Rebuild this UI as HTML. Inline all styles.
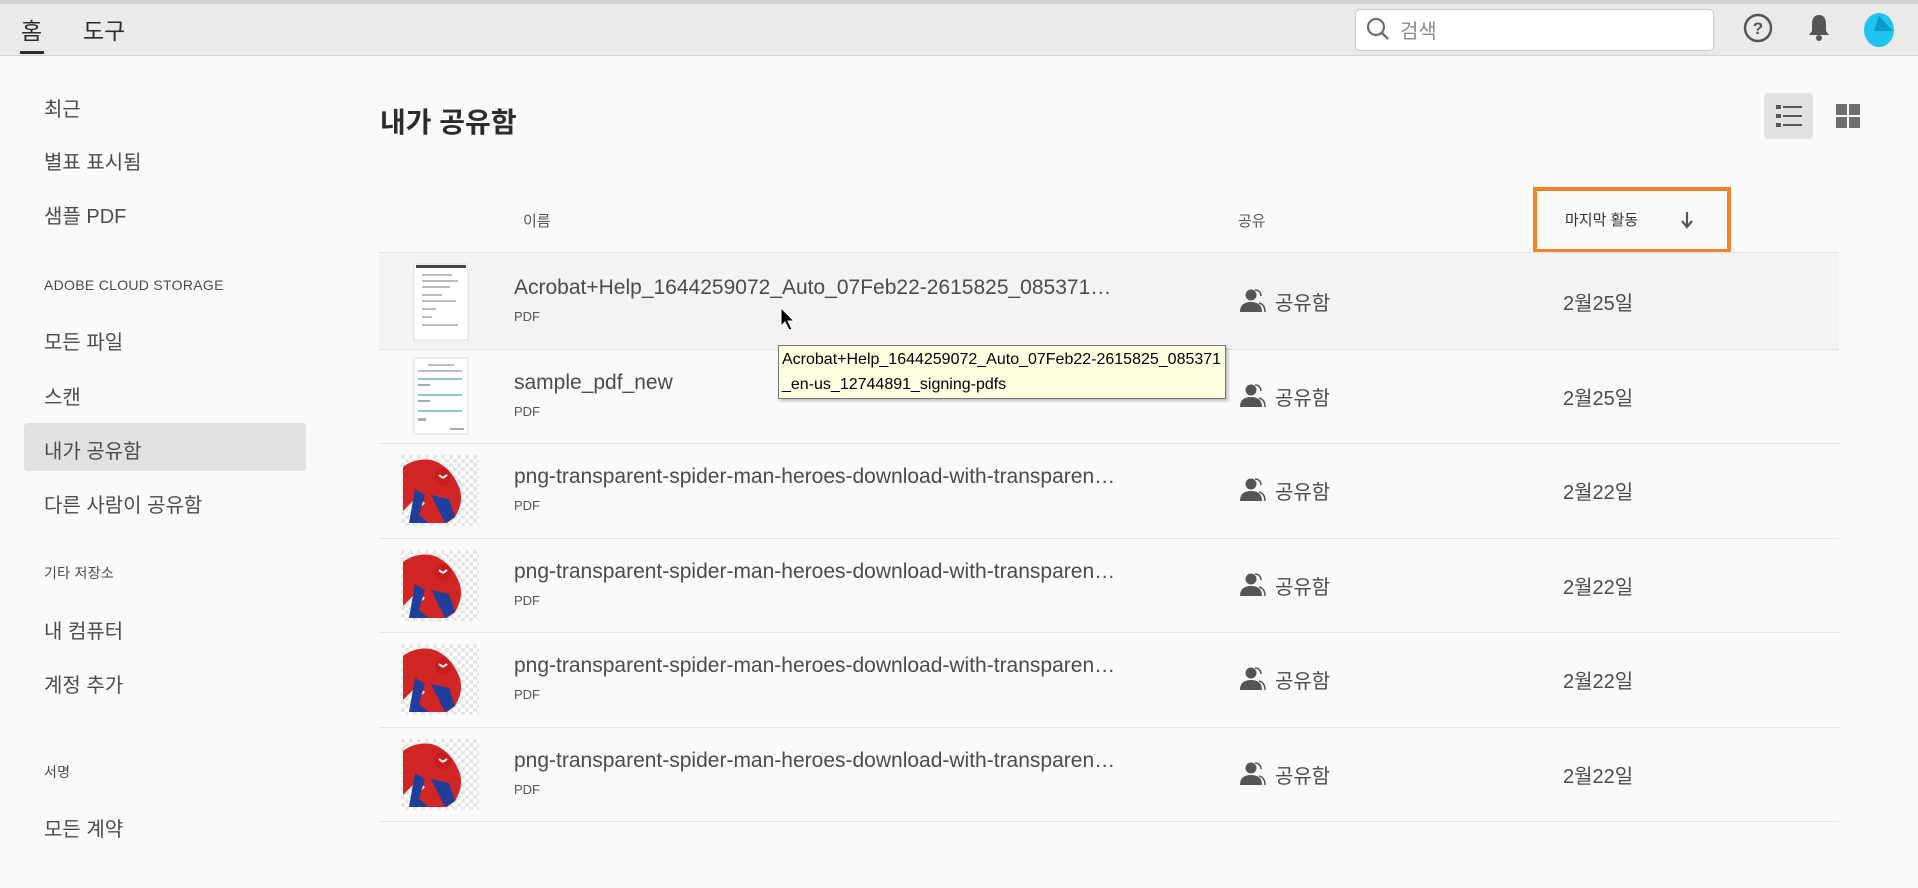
<!DOCTYPE html>
<html><head><meta charset="utf-8"><style>
*{box-sizing:border-box;margin:0;padding:0}
body{width:1918px;height:888px;overflow:hidden;background:#fafafa;font-family:"Liberation Sans","Noto Sans CJK KR",sans-serif;color:#4b4b4b;position:relative}
.a{position:absolute;white-space:nowrap}
#top{position:absolute;left:0;top:0;width:1918px;height:56px;background:#eaeaea;border-top:4px solid #d0d0d0;border-bottom:1px solid #d4d4d4}
.nav{font-size:23px;color:#2c2c2c}
.side{font-size:20px;color:#4b4b4b;left:44px}
.cap{font-size:14px;color:#4b4b4b;left:44px;letter-spacing:.3px}
.fn{font-family:"Liberation Sans Narrow","Liberation Sans","Noto Sans CJK KR",sans-serif;font-size:21px;color:#4b4b4b;width:606px;overflow:hidden;text-overflow:ellipsis}
.pdf{font-family:"Liberation Sans Narrow","Liberation Sans",sans-serif;font-size:13px;color:#555}
.sh{font-size:20px;color:#4b4b4b}
.line{position:absolute;left:379px;width:1460px;height:1px;background:#e3e3e3}
</style></head><body>
<div id="top"></div>
<div class="a nav" style="left:21px;top:12px">홈</div>
<div class="a" style="left:20px;top:51px;width:24px;height:3px;background:#2c2c2c"></div>
<div class="a nav" style="left:83px;top:12px">도구</div>
<div class="a" style="left:1355px;top:9px;width:359px;height:42px;background:#fff;border:1px solid #c8c8c8;border-radius:5px"></div>
<svg class="a" style="left:1365px;top:16px" width="26" height="26" viewBox="0 0 26 26"><circle cx="11" cy="11" r="8" fill="none" stroke="#6e6e6e" stroke-width="2.2"/><path d="M17 17l6 6" stroke="#6e6e6e" stroke-width="2.4"/></svg>
<div class="a" style="left:1400px;top:15px;font-size:20px;color:#8a8a8a">검색</div>
<svg class="a" style="left:1742px;top:12px" width="32" height="32" viewBox="0 0 32 32"><circle cx="16" cy="16" r="13" fill="none" stroke="#555" stroke-width="2.5"/><text x="16" y="22" text-anchor="middle" font-size="17" font-weight="bold" fill="#555" font-family="Liberation Sans">?</text></svg>
<svg class="a" style="left:1806px;top:12px" width="26" height="32" viewBox="0 0 26 32"><path d="M13 3c-5 0-7 4-7 9v7l-3 4h20l-3-4v-7c0-5-2-9-7-9z" fill="#555"/><circle cx="13" cy="26" r="3" fill="#555"/></svg>
<svg class="a" style="left:1862px;top:11px" width="34" height="38" viewBox="0 0 34 38"><ellipse cx="17" cy="19" rx="15" ry="17" fill="#1ec3ef"/><path d="M17 5l14 15H12z" fill="#0a9ac8"/></svg>

<div class="a" style="left:24px;top:423px;width:282px;height:48px;background:#e1e1e1;border-radius:4px"></div>
<div class="a side" style="top:93px">최근</div>
<div class="a side" style="top:146px">별표 표시됨</div>
<div class="a side" style="top:200px">샘플 PDF</div>
<div class="a cap" style="top:277px">ADOBE CLOUD STORAGE</div>
<div class="a side" style="top:326px">모든 파일</div>
<div class="a side" style="top:381px">스캔</div>
<div class="a side" style="top:435px">내가 공유함</div>
<div class="a side" style="top:489px">다른 사람이 공유함</div>
<div class="a cap" style="top:563px">기타 저장소</div>
<div class="a side" style="top:615px">내 컴퓨터</div>
<div class="a side" style="top:669px">계정 추가</div>
<div class="a cap" style="top:762px">서명</div>
<div class="a side" style="top:813px">모든 계약</div>

<div class="a" style="left:380px;top:101px;font-size:28px;font-weight:bold;color:#2c2c2c">내가 공유함</div>
<div class="a" style="left:1764px;top:93px;width:49px;height:46px;background:#e1e1e1;border-radius:4px"></div>
<svg class="a" style="left:1776px;top:104px" width="26" height="24" viewBox="0 0 26 24"><g fill="#555"><rect x="0" y="1" width="5" height="4"/><rect x="7" y="2" width="19" height="2"/><rect x="0" y="10" width="5" height="4"/><rect x="7" y="11" width="19" height="2"/><rect x="0" y="19" width="5" height="4"/><rect x="7" y="20" width="19" height="2"/></g></svg>
<svg class="a" style="left:1836px;top:104px" width="24" height="24" viewBox="0 0 24 24"><g fill="#6e6e6e"><rect x="0" y="0" width="11" height="11"/><rect x="13" y="0" width="11" height="11"/><rect x="0" y="13" width="11" height="11"/><rect x="13" y="13" width="11" height="11"/></g></svg>

<div class="a" style="left:523px;top:210px;font-size:15px;color:#555">이름</div>
<div class="a" style="left:1238px;top:210px;font-size:15px;color:#555">공유</div>
<div class="a" style="left:1533px;top:187px;width:198px;height:66px;border:4px solid #f5832a"></div>
<div class="a" style="left:1565px;top:209px;font-size:15px;color:#333">마지막 활동</div>
<svg class="a" style="left:1680px;top:211px" width="14" height="18" viewBox="0 0 14 18"><path d="M7 1v14M2 10l5 6 5-6" fill="none" stroke="#555" stroke-width="2.2"/></svg>
<div class="line" style="top:252px"></div>
<div class="a" style="left:379px;top:253px;width:1460px;height:96px;background:#f3f3f3"></div>
<div class="line" style="top:349px"></div>
<div class="line" style="top:443px"></div>
<div class="line" style="top:538px"></div>
<div class="line" style="top:632px"></div>
<div class="line" style="top:727px"></div>
<div class="line" style="top:821px"></div>

<svg width="0" height="0" style="position:absolute"><defs>
<pattern id="ck" width="8" height="8" patternUnits="userSpaceOnUse"><rect width="8" height="8" fill="#fff"/><rect width="4" height="4" fill="#e6e6e6"/><rect x="4" y="4" width="4" height="4" fill="#e6e6e6"/></pattern>
<g id="sp"><rect width="78" height="71" fill="url(#ck)"/><path d="M2 12c10-8 26-10 36-4 10 6 16 14 20 24 4 10 2 20-4 30l-8 6H20l-6-10 10-10-8-6-14 14z" fill="#d22525"/><path d="M14 34l10 6-6 20 10 8H8z" fill="#1f3f9a"/><path d="M30 40l18 4 6 18-10 6z" fill="#1f3f9a"/><ellipse cx="42" cy="22" rx="8" ry="9" fill="#c81e1e"/><path d="M38 20l4 3M46 20l-4 3" stroke="#fff" stroke-width="2"/></g>
<g id="doc"><rect width="54" height="76" fill="#fff" stroke="#ddd"/><rect x="2" y="1" width="50" height="3" fill="#444"/><g fill="#bbb"><rect x="8" y="10" width="30" height="2"/><rect x="8" y="16" width="36" height="2"/><rect x="8" y="22" width="28" height="2"/><rect x="8" y="30" width="20" height="2"/><rect x="8" y="36" width="34" height="2"/><rect x="8" y="44" width="14" height="2"/><rect x="8" y="52" width="10" height="2"/><rect x="8" y="60" width="36" height="2"/></g></g>
<g id="doc2"><rect width="54" height="76" fill="#fff" stroke="#ddd"/><g fill="#bbb"><rect x="14" y="6" width="26" height="2"/><rect x="4" y="12" width="44" height="2"/></g><g fill="#8cc7d4"><rect x="4" y="20" width="44" height="2"/><rect x="4" y="36" width="44" height="2"/><rect x="4" y="52" width="44" height="2"/></g><g fill="#aaa"><rect x="4" y="26" width="12" height="2"/><rect x="4" y="42" width="12" height="2"/><rect x="4" y="60" width="8" height="3"/><rect x="36" y="70" width="14" height="2"/></g></g>
<g id="usr"><circle cx="12" cy="7" r="5.5" fill="#555"/><path d="M1 24c0-7 4-10 11-10s11 3 11 10z" fill="#555"/><path d="M16 2c4 0 6 3 6 6M20 15c4 1 6 4 6 9" stroke="#555" stroke-width="1.5" fill="none"/></g>
</defs></svg>

<svg class="a" style="left:413px;top:263px" width="56" height="78"><use href="#doc" x="1" y="1"/></svg>
<svg class="a" style="left:413px;top:357px" width="56" height="78"><use href="#doc2" x="1" y="1"/></svg>
<svg class="a" style="left:401px;top:455px" width="78" height="71"><use href="#sp"/></svg>
<svg class="a" style="left:401px;top:550px" width="78" height="71"><use href="#sp"/></svg>
<svg class="a" style="left:401px;top:644px" width="78" height="71"><use href="#sp"/></svg>
<svg class="a" style="left:401px;top:739px" width="78" height="71"><use href="#sp"/></svg>

<div class="a fn" style="left:514px;top:276px">Acrobat+Help_1644259072_Auto_07Feb22-2615825_085371_en-us_12744891_signing-pdfs</div>
<div class="a pdf" style="left:514px;top:309px">PDF</div>
<div class="a fn" style="left:514px;top:371px">sample_pdf_new</div>
<div class="a pdf" style="left:514px;top:404px">PDF</div>
<div class="a fn" style="left:514px;top:465px">png-transparent-spider-man-heroes-download-with-transparent-background</div>
<div class="a pdf" style="left:514px;top:498px">PDF</div>
<div class="a fn" style="left:514px;top:560px">png-transparent-spider-man-heroes-download-with-transparent-background</div>
<div class="a pdf" style="left:514px;top:593px">PDF</div>
<div class="a fn" style="left:514px;top:654px">png-transparent-spider-man-heroes-download-with-transparent-background</div>
<div class="a pdf" style="left:514px;top:687px">PDF</div>
<div class="a fn" style="left:514px;top:749px">png-transparent-spider-man-heroes-download-with-transparent-background</div>
<div class="a pdf" style="left:514px;top:782px">PDF</div>

<svg class="a" style="left:1239px;top:288px" width="28" height="26"><use href="#usr"/></svg>
<svg class="a" style="left:1239px;top:383px" width="28" height="26"><use href="#usr"/></svg>
<svg class="a" style="left:1239px;top:477px" width="28" height="26"><use href="#usr"/></svg>
<svg class="a" style="left:1239px;top:572px" width="28" height="26"><use href="#usr"/></svg>
<svg class="a" style="left:1239px;top:666px" width="28" height="26"><use href="#usr"/></svg>
<svg class="a" style="left:1239px;top:761px" width="28" height="26"><use href="#usr"/></svg>
<div class="a sh" style="left:1275px;top:287px">공유함</div><div class="a sh" style="left:1563px;top:287px">2월25일</div>
<div class="a sh" style="left:1275px;top:382px">공유함</div><div class="a sh" style="left:1563px;top:382px">2월25일</div>
<div class="a sh" style="left:1275px;top:476px">공유함</div><div class="a sh" style="left:1563px;top:476px">2월22일</div>
<div class="a sh" style="left:1275px;top:571px">공유함</div><div class="a sh" style="left:1563px;top:571px">2월22일</div>
<div class="a sh" style="left:1275px;top:665px">공유함</div><div class="a sh" style="left:1563px;top:665px">2월22일</div>
<div class="a sh" style="left:1275px;top:760px">공유함</div><div class="a sh" style="left:1563px;top:760px">2월22일</div>

<div class="a" style="left:778px;top:345px;width:448px;height:54px;background:#ffffe1;border:1px solid #767676;box-shadow:2px 2px 3px rgba(0,0,0,.25);font-family:'Liberation Sans Narrow','Liberation Sans',sans-serif;font-size:16px;color:#000;line-height:25px;padding:1px 3px;white-space:normal;word-break:break-all">Acrobat+Help_1644259072_Auto_07Feb22-2615825_085371_en-us_12744891_signing-pdfs</div>
<svg class="a" style="left:780px;top:307px" width="16" height="24" viewBox="0 0 16 24"><path d="M1 1v18l4-4 4 8 3-1-4-8h6z" fill="#000" stroke="#fff" stroke-width="1"/></svg>
</body></html>
